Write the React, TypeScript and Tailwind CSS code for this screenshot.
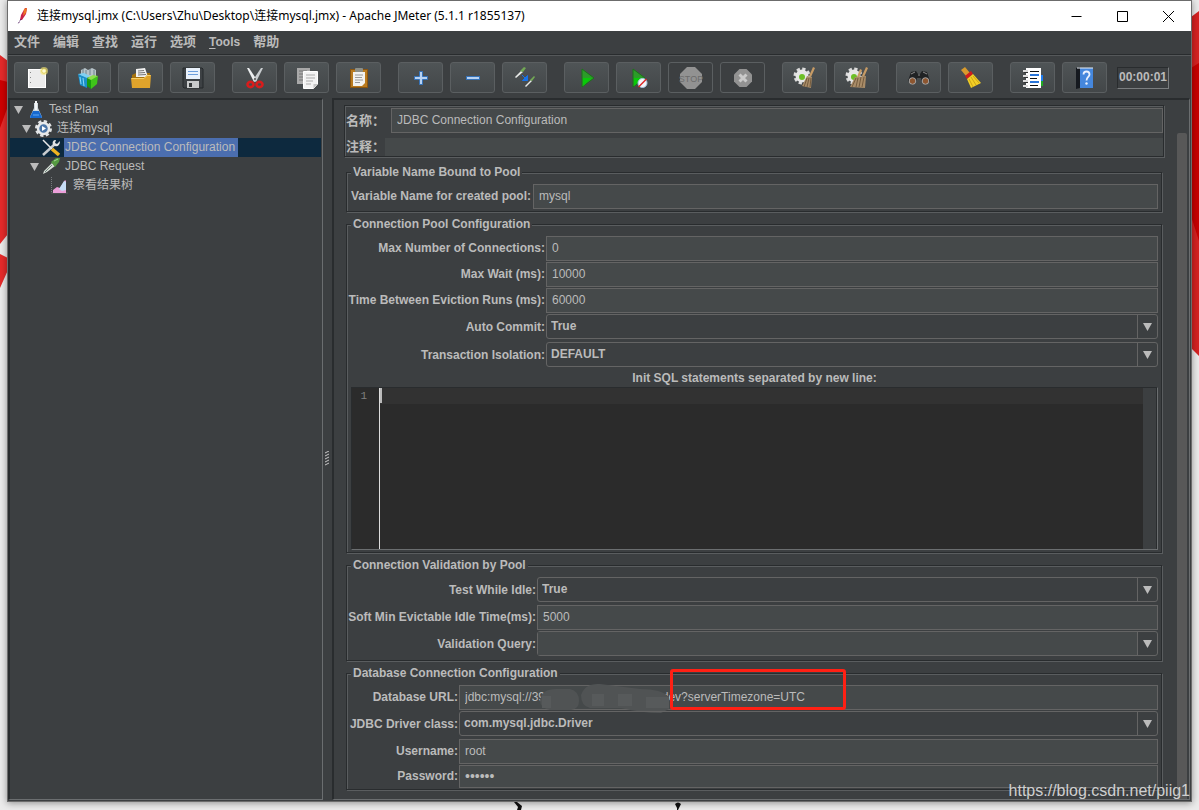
import type { ReactNode } from "react";

const ui = "font-['Liberation_Sans','Noto_Sans_CJK_SC',sans-serif]";
const etched = "border border-[#292c2e] shadow-[1px_1px_0_#5a5d5f,inset_1px_1px_0_#5a5d5f]";
const field = "w-full min-w-0 border border-[#646464] bg-[#45494a] px-[5px] pb-[2px] text-[#bbbbbb] outline-none";

/* ---------- toolbar icons ---------- */

function Svg({ children }: { children: ReactNode }) {
  return (
    <svg width="24" height="24" viewBox="0 0 24 24" aria-hidden="true">
      {children}
    </svg>
  );
}

const Gear = () => (
  <>
    <circle cx="9" cy="10" r="7" fill="none" stroke="#dcdcdc" strokeWidth="3" strokeDasharray="3.2 2.3" />
    <circle cx="9" cy="10" r="6.5" fill="#e6e6e6" />
    <circle cx="9" cy="11" r="3" fill="#6cbf26" />
  </>
);

const icons: Record<string, ReactNode> = {
  New: (
    <>
      <rect x="3.500" y="3.500" width="17" height="18" fill="#ececec" stroke="#fff" />
      <path d="M5.500 6v1M5.500 11v1M5.500 16v1" stroke="#888" />
      <circle cx="19" cy="5" r="4" fill="#f6e77a" opacity=".6" />
      <circle cx="19" cy="5" r="2.300" fill="#fffbd0" stroke="#d9c63a" strokeWidth=".7" />
    </>
  ),
  Templates: (
    <>
      <path d="M4 4l4-2 3 2 4-2 4 2v7H4z" fill="#b7c3c8" />
      <path d="M6 3v7M9 4v6M13 3v6M17 4v6" stroke="#6f8590" />
      <path d="M1 8l9 3v11l-7-3z" fill="#1c8fc9" />
      <path d="M1 8l6-1 6 3-3 2z" fill="#7fd0f2" />
      <path d="M3 11l1 7M6 12l1 8" stroke="#8ad8f8" />
      <path d="M10 12l4 2v9l-4-3z" fill="#199b12" />
      <path d="M14 13l7-3-1 8-6 5z" fill="#3fc41a" />
      <path d="M10 12l6-3 5 1-7 4z" fill="#8be04c" />
    </>
  ),
  Open: (
    <>
      <path d="M3 9l4-2h14v14H3z" fill="#a5720f" />
      <path d="M7 3l9-1 3 9H7z" fill="#f1f1f1" />
      <path d="M9 5l6-.5M9 7l7-.5M9 9l8-.5" stroke="#777" />
      <path d="M2 12h13l3-3h4l-1 13H3z" fill="#dfa32b" />
      <path d="M2.500 12.500H15l3-3h3.500" stroke="#f6cf69" fill="none" />
    </>
  ),
  Save: (
    <>
      <path d="M2 2h19l1 1v19H3l-1-1z" fill="#3d4144" stroke="#24282a" />
      <rect x="5" y="2" width="14" height="11" fill="#e9f1fb" />
      <path d="M7 5.500h10M7 8.500h10" stroke="#6d9edb" />
      <rect x="6" y="15" width="12" height="7" fill="#c9cbcc" />
      <rect x="8" y="17" width="3" height="4" fill="#35393b" />
    </>
  ),
  Cut: (
    <>
      <path d="M4 2l2 0 8 12-3 2z" fill="#eceeef" />
      <path d="M20 2l-2 0-8 12 3 2z" fill="#c9cdd0" />
      <circle cx="12" cy="13" r="1" fill="#555" />
      <ellipse cx="7.500" cy="18.500" rx="3" ry="2.600" fill="none" stroke="#d91c1c" strokeWidth="2.600" />
      <ellipse cx="16.500" cy="18.500" rx="3" ry="2.600" fill="none" stroke="#d91c1c" strokeWidth="2.600" />
    </>
  ),
  Copy: (
    <>
      <path d="M2 2h13v16H2z" fill="#a9a9a9" />
      <path d="M4 5h8M4 8h6M4 11h5M4 14h5" stroke="#747474" />
      <path d="M8.500 5.500h14V18l-4 4.500h-10z" fill="#f3f3f3" stroke="#fff" />
      <path d="M11 9h9M11 12h9M11 15h7M11 18h5" stroke="#ababab" />
      <path d="M22.500 18h-4v4.500z" fill="#c4c4c4" />
    </>
  ),
  Paste: (
    <>
      <rect x="3.500" y="3.500" width="17" height="18" fill="#b97b20" stroke="#8a5510" />
      <path d="M6 6h12v11l-3 3H6z" fill="#f2f2f0" />
      <rect x="8" y="2" width="8" height="4" rx="1" fill="#8c8f88" />
      <path d="M8 9h8M8 11.500h7M8 14h8M8 16.500h5" stroke="#9a9a9a" />
    </>
  ),
  Expand: <path d="M10.500 5.500h3v5h5v3h-5v5h-3v-5h-5v-3h5z" fill="#b8d2f2" stroke="#3572b8" />,
  Collapse: <rect x="5.500" y="10.500" width="13" height="3" fill="#b8d2f2" stroke="#3572b8" />,
  Toggle: (
    <>
      <path d="M2 11l6-6 2 1-7 6z" fill="#e8eae8" />
      <path d="M7 5l4-4 2 1-3 4z" fill="#72a855" />
      <path d="M12 20l6-6 1 1-6 6z" fill="#e8eae8" />
      <path d="M17 14l4-4 1 1-3 4z" fill="#72a855" />
      <path d="M9 9l4 4M14.500 9.500v5h-5z" fill="#1772e8" stroke="#1772e8" />
    </>
  ),
  Start: (
    <>
      <path d="M7 3l12 9L7 21z" fill="#2c9c29" stroke="#1b7419" />
      <path d="M8 12h9l-9 8z" fill="#09c909" />
    </>
  ),
  "Start no pauses": (
    <>
      <path d="M6 3l12 9L6 21z" fill="#2c9c29" stroke="#1b7419" />
      <path d="M7 12h9l-9 8z" fill="#09c909" />
      <circle cx="15.500" cy="17" r="4.500" fill="#f4f6fa" stroke="#a9c4e2" />
      <path d="M11.500 21l8-8" stroke="#dd2525" strokeWidth="1.500" />
    </>
  ),
  Stop: (
    <>
      <path d="M8 1h8l7 7v8l-7 7H8l-7-7V8z" fill="#929292" />
      <text x="12" y="15.500" textAnchor="middle" fontSize="9" fill="#6c6c6c" fontFamily="Liberation Sans Narrow, Liberation Sans">
        STOP
      </text>
    </>
  ),
  Shutdown: (
    <>
      <path d="M8.500 3h7L21 8.500v7L15.500 21h-7L3 15.500v-7z" fill="#929292" />
      <path d="M8.500 8.500l7 7M15.500 8.500l-7 7" stroke="#cacaca" strokeWidth="3" />
    </>
  ),
  Clear: (
    <>
      <Gear />
      <path d="M20 1l2 1-4 9-2-1z" fill="#c79b65" />
      <path d="M14 10l5 1-1 11-9-2z" fill="#a98c68" />
      <path d="M14 12l-3 9M16 12l-2 9M18 12l-1 9" stroke="#755c3f" />
    </>
  ),
  "Clear all": (
    <>
      <Gear />
      <path d="M15 3l2 1-3 8-2-1zM21 1l2 1-4 9-2-1z" fill="#c79b65" />
      <path d="M10 11l11-1-1 12-15-1z" fill="#a98c68" />
      <path d="M11 12l-4 9M13 12l-2 9M16 11l-2 10M19 11l-2 10" stroke="#755c3f" />
    </>
  ),
  Search: (
    <>
      <path d="M4 6l5-1 2 3h2l2-3 5 1 3 9-4 4-4-3-1-4h-4l-1 4-4 3-4-4z" fill="#202224" />
      <path d="M4 8l4-2M20 8l-4-2M11 9h2" stroke="#8c8c8c" />
      <circle cx="5.500" cy="15" r="3.300" fill="#8d5630" stroke="#a7a7a7" />
      <circle cx="18.500" cy="15" r="3.300" fill="#8d5630" stroke="#a7a7a7" />
    </>
  ),
  "Reset search": (
    <>
      <path d="M2 4l4-3 5 6-4 3z" fill="#d79a2d" />
      <path d="M6 10l6-5 2 3-6 5z" fill="#cf1c1c" />
      <path d="M8 13l6-5 8 9-10 5z" fill="#f2cf25" />
      <path d="M10 13l4 8M12 11l5 8M14 10l6 7" stroke="#bb9110" strokeWidth=".7" />
    </>
  ),
  "Function helper": (
    <>
      <rect x="19" y="9" width="3" height="6" fill="#1d7cf0" />
      <rect x="19" y="15" width="3" height="5" fill="#1fa824" />
      <rect x="5" y="2" width="15" height="20" fill="#fff" />
      <path d="M9 5.500h9M9 12.500h7M9 19.500h8" stroke="#111" />
      <path d="M9 9h9M9 16h9" stroke="#2874d8" strokeWidth="2" />
      <path d="M2 5h5M2 10h5M2 15h5M2 20h5" stroke="#ddd" strokeWidth="2" />
      <path d="M3 6.500h4M3 11.500h4M3 16.500h4" stroke="#333" />
    </>
  ),
  Help: (
    <>
      <path d="M3 2l4-1v21l-4 1z" fill="#15191f" />
      <rect x="7" y="2" width="13" height="20" fill="#4587dd" />
      <path d="M4 2h16" stroke="#e9eef5" />
      <path d="M10.500 8.500c0-4 6-4 6 0 0 2.500-3 2.500-3 6" fill="none" stroke="#e9f1ff" strokeWidth="1.800" />
      <circle cx="13.500" cy="17.500" r="1.200" fill="#e9f1ff" />
    </>
  ),
};

const toolGroups = [
  ["New", "Templates", "Open", "Save"],
  ["Cut", "Copy", "Paste"],
  ["Expand", "Collapse", "Toggle"],
  ["Start", "Start no pauses", "Stop", "Shutdown"],
  ["Clear", "Clear all"],
  ["Search", "Reset search"],
  ["Function helper", "Help"],
];
const disabledTools = ["Stop", "Shutdown"];

/* ---------- tree ---------- */

function TreeIcon({ children }: { children: ReactNode }) {
  return (
    <svg className="shrink-0" width="19" height="19" viewBox="0 0 19 19" aria-hidden="true">
      {children}
    </svg>
  );
}

const treeRows = [
  {
    label: "Test Plan",
    indent: "pl-1",
    open: true,
    icon: (
      <>
        <path d="M8 3h4v5l4 9q0 1-1 1H5q-1 0-1-1l4-9z" fill="#cfd9df" />
        <path d="M7 11h6l3 6q0 1-1 1H5q-1 0-1-1z" fill="#1769cf" />
        <path d="M9 1h2v9H9z" fill="#f4f6f7" />
        <path d="M7 15h6" stroke="#63aaf2" />
      </>
    ),
  },
  {
    label: "连接mysql",
    indent: "pl-3",
    open: true,
    icon: (
      <>
        <circle cx="9.500" cy="9.500" r="7" fill="none" stroke="#e0e2e4" strokeWidth="3" strokeDasharray="3.200 2.300" />
        <circle cx="9.500" cy="9.500" r="5.500" fill="#4b76a8" stroke="#e7e9ea" strokeWidth="2.500" />
        <path d="M8 7l4 2.500L8 12z" fill="#fff" />
      </>
    ),
  },
  {
    label: "JDBC Connection Configuration",
    indent: "pl-8",
    selected: true,
    icon: (
      <>
        <path d="M1 17L13 6" stroke="#c8cccf" strokeWidth="2.500" />
        <path d="M18 3l-3 3-2-1 1-3c-3 0-4 2-3 5l2 1c3 1 5-1 5-5" fill="#e2e4e5" />
        <path d="M1 2l9 9" stroke="#e8e8e8" strokeWidth="1.500" />
        <path d="M10 11l7 6" stroke="#efb321" strokeWidth="3.500" />
      </>
    ),
  },
  {
    label: "JDBC Request",
    indent: "pl-5",
    open: true,
    icon: (
      <>
        <path d="M1 17l1-3 8-8 3 3-8 6z" fill="#d5dcd6" />
        <path d="M3 15l7-7" stroke="#70857a" />
        <path d="M9 5l5-4 4 0-1 4-4 5z" fill="#559a42" />
        <path d="M12 4l4-2" stroke="#a5d694" />
      </>
    ),
  },
  {
    label: "察看结果树",
    indent: "pl-10",
    icon: (
      <>
        <path d="M1.500 1v16H18" stroke="#777b7d" strokeDasharray="1 1" fill="none" />
        <path d="M3 17v-3l4-3 3 1 5-8 1 1v12z" fill="#ec9fd9" />
        <path d="M9 13l5-8 2 1v8l-4 1z" fill="#c5dcf5" />
      </>
    ),
  },
];

const DownArrow = () => (
  <svg width="9" height="8" viewBox="0 0 9 8" aria-hidden="true">
    <path d="M0 0h9L4.500 8z" fill="#bbbbbb" />
  </svg>
);

/* ---------- form pieces ---------- */

function Label({ htmlFor, className = "", children }: { htmlFor: string; className?: string; children: ReactNode }) {
  return (
    <label htmlFor={htmlFor} className={`flex h-[25px] items-center justify-end whitespace-nowrap ${className}`}>
      {children}
    </label>
  );
}

function TextRow({ id, label, value }: { id: string; label: string; value: string }) {
  return (
    <>
      <Label htmlFor={id} className="pb-[2px]">{label}</Label>
      <input id={id} defaultValue={value} className={`${field} mb-px h-[25px]`} />
    </>
  );
}

function SelectRow({ id, label, value }: { id: string; label: string; value: string }) {
  return (
    <>
      <Label htmlFor={id}>{label}</Label>
      <div className="relative mb-[3px] flex h-[25px] rounded-[3px] border border-[#646464]">
        <select
          id={id}
          defaultValue={value}
          className="w-full appearance-none bg-transparent pb-[2px] pl-1 font-bold text-[#bbbbbb] outline-none"
        >
          <option>{value}</option>
        </select>
        <span className="pointer-events-none absolute inset-y-0 right-0 flex w-5 items-center justify-center border-l border-[#646464] pt-px">
          <DownArrow />
        </span>
      </div>
    </>
  );
}

function Group({ title, children }: { title: string; children: ReactNode }) {
  return (
    <fieldset className={`mx-[2px] min-w-0 pb-px pl-1 pr-[3px] ${etched}`}>
      <legend className="mb-1 h-4 bg-[#3c3f41] px-[2px] leading-4">{title}</legend>
      {children}
    </fieldset>
  );
}

export default function App() {
  return (
    <div className={`relative flex min-h-screen flex-col bg-[#ebebeb] px-[7px] text-xs text-[#bbbbbb] ${ui}`}>
      {/* desktop wallpaper that shows beside the window */}
      <svg className="absolute left-0 top-0" width="8" height="300" aria-hidden="true">
        <path d="M0 55l8 6v173l-8 10zM0 254l8 4v12l-8 18z" fill="#e62a2a" />
        <path d="M0 80l8 2v24l-8 22z" fill="#cf0000" />
      </svg>
      <svg className="absolute right-0 top-0" width="8" height="360" aria-hidden="true">
        <path d="M0 17l8-6v345l-8-8z" fill="#d62222" />
        <path d="M0 68l8-5v178L0 216z" fill="#c80000" />
      </svg>
      <svg className="absolute bottom-0 left-0" width="700" height="8" aria-hidden="true">
        <path d="M514 0l3 0 5 4-1 4h-4l1-3zM675 2q3-3 6 0l-2 4-1 2h-1v-2z" fill="#111" />
      </svg>

      <div className="relative flex flex-col border border-[#6c6c6c] bg-[#3c3f41] shadow-[0_1px_7px_rgba(0,0,0,0.4)]">
        <header className="flex h-[30px] items-center bg-white pl-2 font-['Noto_Sans','Noto_Sans_CJK_SC',sans-serif] text-black">
          <svg width="14" height="18" viewBox="0 0 14 18" aria-hidden="true">
            <path d="M9 1l2 0-1 6-4 6-2 0 1-5z" fill="#c9214a" />
            <path d="M8 2l3-1-1 5-3 3z" fill="#ee7623" />
            <path d="M5 12l-3 5" stroke="#5b2a6b" strokeDasharray="2 1" />
          </svg>
          <h1 className="ml-[7px] flex-1 truncate">
            连接mysql.jmx (C:\Users\Zhu\Desktop\连接mysql.jmx) - Apache JMeter (5.1.1 r1855137)
          </h1>
          {[
            ["Minimize", "M.5 5.500h10"],
            ["Maximize", "M.5.5h10v10H.5z"],
            ["Close", "M0 0l11 11M11 0L0 11"],
          ].map(([name, d]) => (
            <button key={name} aria-label={name} className="flex h-full w-[46px] items-center justify-center">
              <svg width="11" height="11" viewBox="0 0 11 11">
                <path d={d} fill="none" stroke="#000" />
              </svg>
            </button>
          ))}
        </header>

        <nav className="flex h-6 items-center gap-[13px] border-b border-[#292c2e] pl-[6px] text-[13px] font-bold">
          {["文件", "编辑", "查找", "运行", "选项", "Tools", "帮助"].map((item) =>
            item === "Tools" ? (
              <button key={item} className="pb-[2px] text-xs leading-4">
                <span className="underline underline-offset-2">T</span>ools
              </button>
            ) : (
              <button key={item} className="pb-px leading-4">{item}</button>
            )
          )}
        </nav>

        <div className="flex items-center gap-[17px] border-t border-[#55585a] pb-[5px] pl-[6px] pt-[6px]" role="toolbar">
          {toolGroups.map((group) => (
            <div key={group[0]} className="flex gap-[7px]">
              {group.map((name) => (
                <button
                  key={name}
                  aria-label={name}
                  disabled={disabledTools.includes(name)}
                  className="flex h-[31px] w-[45px] items-center justify-center rounded-[3px] border border-[#5b5f61] bg-linear-to-b from-[#4f5456] to-[#434749] disabled:bg-none"
                >
                  <Svg>{icons[name]}</Svg>
                </button>
              ))}
            </div>
          ))}
          <output className="-ml-[7px] flex h-[22px] w-[52px] items-center justify-center border border-b-[#7a7d7f] border-l-[#292c2e] border-r-[#7a7d7f] border-t-[#292c2e] pb-[2px] font-bold">
            00:00:01
          </output>
        </div>

        <main className="flex pb-px pr-px">
          <aside className="w-[315px] shrink-0 border-b border-l-2 border-r border-t-2 border-b-[#6b6e70] border-l-[#292c2e] border-r-[#6b6e70] border-t-[#292c2e] pr-px">
            <ul>
              {treeRows.map((row) => (
                <li key={row.label} className={`flex h-[19px] items-center ${row.indent} ${row.selected ? "bg-[#0d293e]" : ""}`}>
                  {row.open && (
                    <button aria-label={`Collapse ${row.label}`} className="mr-[3px]">
                      <DownArrow />
                    </button>
                  )}
                  <TreeIcon>{row.icon}</TreeIcon>
                  <span className={`ml-[3px] px-px leading-[19px] ${row.selected ? "bg-[#4b6eaf] pr-[3px]" : ""}`}>{row.label}</span>
                </li>
              ))}
            </ul>
          </aside>

          <div className="flex w-[9px] shrink-0 cursor-col-resize items-center justify-center pt-5">
            <svg width="5" height="16" viewBox="0 0 5 16" aria-hidden="true">
              <path d="M0 2l4-2M0 5l4-2M0 8l4-2M0 11l4-2M0 14l4-2" stroke="#c8c8c8" />
            </svg>
          </div>

          <section className="flex min-w-0 flex-1 border-b border-l-2 border-r border-t-2 border-b-[#6b6e70] border-l-[#292c2e] border-r-[#6b6e70] border-t-[#292c2e] pl-[10px] pr-[2px]">
            <form className="flex min-w-0 flex-1 flex-col gap-1 pb-[9px] pt-[5px] font-bold">
              <div className={`mb-[3px] flex flex-col gap-[5px] pl-px pt-[2px] ${etched}`}>
                <div className="flex items-center">
                  <label htmlFor="name" className="w-[45px] shrink-0 text-[13px]">名称：</label>
                  <input id="name" defaultValue="JDBC Connection Configuration" className={`${field} h-[25px] font-normal`} />
                </div>
                <div className="flex items-center">
                  <label htmlFor="comment" className="w-[39px] shrink-0 text-[13px] leading-[18px]">注释：</label>
                  <input id="comment" className="h-[18px] w-full bg-[#45494a] px-[6px] font-normal outline-none" />
                </div>
              </div>

              <Group title="Variable Name Bound to Pool">
                <div className="grid grid-cols-[180px_1fr] gap-x-[2px] [&_input]:font-normal">
                  <TextRow id="pool" label="Variable Name for created pool:" value="mysql" />
                </div>
              </Group>

              <Group title="Connection Pool Configuration">
                <div className="grid grid-cols-[194px_1fr] gap-x-px [&_input]:font-normal">
                  <TextRow id="maxConn" label="Max Number of Connections:" value="0" />
                  <TextRow id="maxWait" label="Max Wait (ms):" value="10000" />
                  <TextRow id="eviction" label="Time Between Eviction Runs (ms):" value="60000" />
                  <SelectRow id="autoCommit" label="Auto Commit:" value="True" />
                  <SelectRow id="isolation" label="Transaction Isolation:" value="DEFAULT" />
                </div>
                <label htmlFor="initSql" className="block h-[17px] text-center leading-4">
                  Init SQL statements separated by new line:
                </label>
                <div className="mb-px flex h-[163px] border border-b-[#6b6e70] border-l-[#292c2e] border-r-[#6b6e70] border-t-[#292c2e] bg-[#2b2b2b]">
                  <span className="w-[27px] pr-3 text-right font-['Liberation_Mono',monospace] text-[11px] font-normal leading-4 text-[#808080]">1</span>
                  <div className="relative flex flex-1 border-l border-[#dddddd]">
                    <textarea
                      id="initSql"
                      className="flex-1 resize-none bg-[linear-gradient(#323232_16px,#2b2b2b_16px)] pl-1 font-['Liberation_Mono',monospace] leading-4 outline-none"
                    />
                    <span className="absolute left-0 top-0 h-[15px] w-[2px] bg-[#bbbbbb]" />
                  </div>
                  <div className="w-[14px] border-r border-[#292c2e] bg-[#3c3f41]" />
                </div>
              </Group>

              <Group title="Connection Validation by Pool">
                <div className="grid grid-cols-[185px_1fr] gap-x-px [&_input]:font-normal">
                  <SelectRow id="testIdle" label="Test While Idle:" value="True" />
                  <TextRow id="softMin" label="Soft Min Evictable Idle Time(ms):" value="5000" />
                  <Label htmlFor="query">Validation Query:</Label>
                  <div className="mb-[3px] flex h-[25px] rounded-[3px] border border-[#646464]">
                    <input id="query" className="min-w-0 flex-1 bg-[#45494a] px-[5px] outline-none" />
                    <button type="button" aria-label="Show queries" className="flex w-5 items-center justify-center border-l border-[#646464] pt-px">
                      <DownArrow />
                    </button>
                  </div>
                </div>
              </Group>

              <Group title="Database Connection Configuration">
                <div className="grid grid-cols-[107px_1fr] gap-x-px [&_input]:font-normal">
                  <Label htmlFor="url" className="pb-[2px]">Database URL:</Label>
                  <div className="relative mb-px">
                    <input
                      id="url"
                      defaultValue={`jdbc:mysql://39${" ".repeat(35)}dev?serverTimezone=UTC`}
                      className={`${field} block h-[25px]`}
                    />
                    {/* smudge over the host name */}
                    <svg className="pointer-events-none absolute left-[81px] top-[-3px]" width="130" height="32" aria-hidden="true">
                      <path d="M0 18Q2 7 16 7h14q9 2 9 12 0 8-8 9H10Q0 26 0 18zM41 13Q45 1 60 2l40 5q22 0 29 8v12l-8 4q-20 0-40-5H50q-9-2-9-13z" fill="#505354" />
                      <path d="M2 14h9v12H2zM52 12h12v12H52zM78 12h14v12H78zM106 15h23v11h-23z" fill="#575a5b" />
                    </svg>
                    <span className="pointer-events-none absolute left-[211px] top-[-16px] h-[41px] w-[176px] rounded-[3px] border-[3px] border-[#ff2014]" />
                  </div>
                  <SelectRow id="driver" label="JDBC Driver class:" value="com.mysql.jdbc.Driver" />
                  <TextRow id="username" label="Username:" value="root" />
                  <label htmlFor="password" className="flex items-center justify-end pb-[2px]">Password:</label>
                  <input id="password" type="password" defaultValue="secret" className={`${field} h-[23px] text-sm`} />
                </div>
              </Group>
            </form>
            <div className="ml-[13px] mt-[33px] w-[10px] shrink-0 rounded-t-[2px] bg-[#585858]" />
          </section>
        </main>
      </div>

      <p className="absolute bottom-[7px] right-[9px] text-base leading-6 text-[#cfcfcf]">https://blog.csdn.net/piig1</p>
    </div>
  );
}
